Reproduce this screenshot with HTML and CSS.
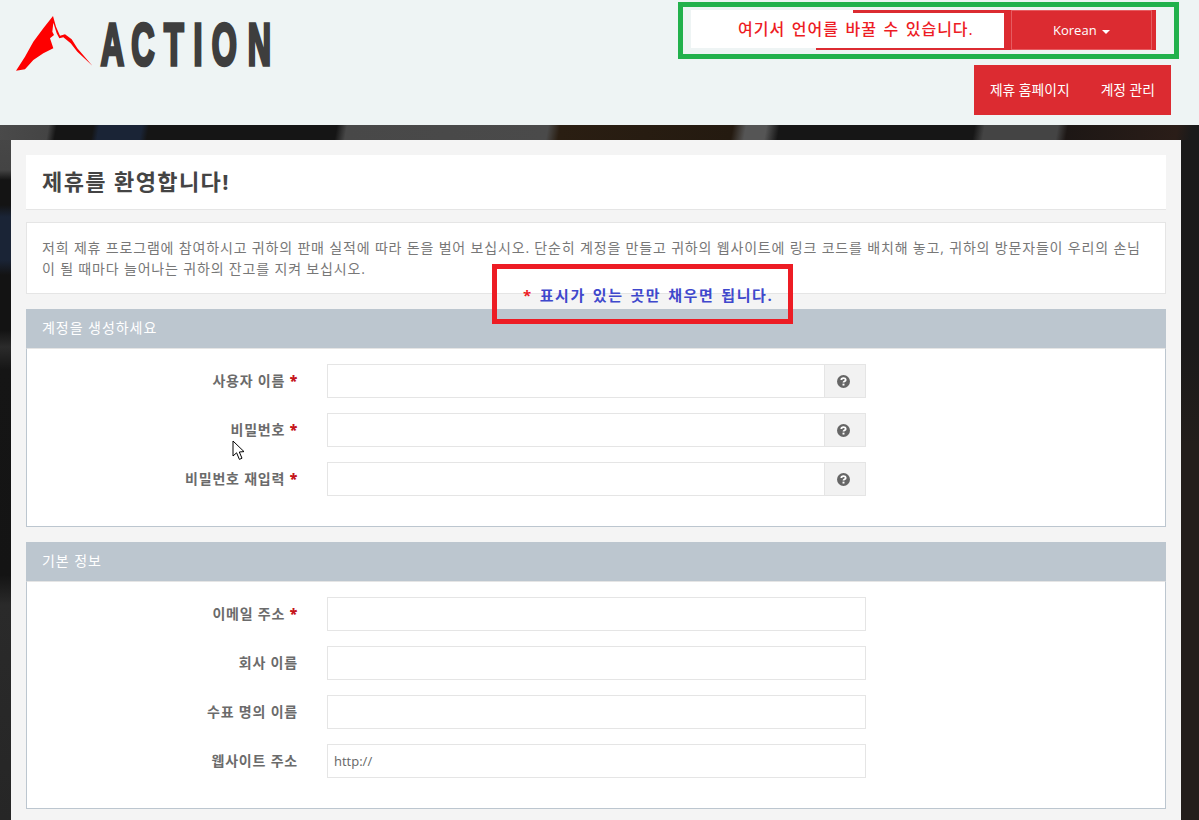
FILE: index.html
```html
<!DOCTYPE html>
<html lang="ko">
<head>
<meta charset="utf-8">
<title>제휴를 환영합니다!</title>
<link rel="stylesheet" href="styles.css">
</head>
<body>
<header class="site-header">
  <svg class="logo" viewBox="0 0 900 375" aria-label="ACTION">
    <path class="logo-mark" d="M159 48 L168 80 L180 107 L195 103 L215 118 L232 145 L277 197 L232 155 L212 130 L190 112 L178 115 L170 100 L160 68 L157 95 L162 105 L150 115 L160 145 L130 160 L100 180 L75 208 L48 212 L75 170 L100 125 L130 85 Z"/>
    <text class="logo-text" transform="scale(.55 1)" x="549 716 895 1055 1155 1352" y="194">ACTION</text>
  </svg>
  <div class="header-right">
    <div class="lang">
      <div class="lang-note">여기서 언어를 바꿀 수 있습니다.</div>
      <button class="lang-btn" type="button">Korean <span class="caret"></span></button>
    </div>
    <nav class="top-nav">
      <a href="#">제휴 홈페이지</a>
      <a href="#">계정 관리</a>
    </nav>
  </div>
</header>

<main class="stage">
  <div class="container">
    <section class="title-box"><h1>제휴를 환영합니다!</h1></section>
    <section class="intro">
      <p>저희 제휴 프로그램에 참여하시고 귀하의 판매 실적에 따라 돈을 벌어 보십시오. 단순히 계정을 만들고 귀하의 웹사이트에 링크 코드를 배치해 놓고, 귀하의 방문자들이 우리의 손님이 될 때마다 늘어나는 귀하의 잔고를 지켜 보십시오.</p>
    </section>

    <section class="panel">
      <h2 class="panel-head">계정을 생성하세요</h2>
      <div class="panel-body">
        <div class="row"><label>사용자 이름 <b>*</b></label>
          <div class="field"><input type="text"><span class="addon"><svg class="help" viewBox="0 0 12 12"><circle cx="6" cy="6" r="6"/><path d="M4 4.6 C4 2.4 8 2.4 8 4.5 C8 5.8 6 5.7 6 7"/><rect x="5.1" y="8" width="1.8" height="1.7"/></svg></span></div></div>
        <div class="row"><label>비밀번호 <b>*</b></label>
          <div class="field"><input type="password"><span class="addon"><svg class="help" viewBox="0 0 12 12"><circle cx="6" cy="6" r="6"/><path d="M4 4.6 C4 2.4 8 2.4 8 4.5 C8 5.8 6 5.7 6 7"/><rect x="5.1" y="8" width="1.8" height="1.7"/></svg></span></div></div>
        <div class="row"><label>비밀번호 재입력 <b>*</b></label>
          <div class="field"><input type="password"><span class="addon"><svg class="help" viewBox="0 0 12 12"><circle cx="6" cy="6" r="6"/><path d="M4 4.6 C4 2.4 8 2.4 8 4.5 C8 5.8 6 5.7 6 7"/><rect x="5.1" y="8" width="1.8" height="1.7"/></svg></span></div></div>
      </div>
    </section>

    <section class="panel">
      <h2 class="panel-head">기본 정보</h2>
      <div class="panel-body">
        <div class="row"><label>이메일 주소 <b>*</b></label><div class="field"><input type="text"></div></div>
        <div class="row"><label>회사 이름</label><div class="field"><input type="text"></div></div>
        <div class="row"><label>수표 명의 이름</label><div class="field"><input type="text"></div></div>
        <div class="row"><label>웹사이트 주소</label><div class="field"><input type="text" value="http://"></div></div>
      </div>
    </section>
  </div>
</main>

<div class="mark-green"></div>
<div class="mark-red"><span><i>*</i> 표시가 있는 곳만 채우면 됩니다.</span></div>
<svg class="cursor" viewBox="0 0 14 22"><path d="M1 1 L1 16 L4.6 12.8 L7.4 19.4 L10 18.2 L7.3 12 L12 11.6 Z"/></svg>
</body>
</html>
```
FILE: styles.css
```css
* { box-sizing: border-box; }
html, body { margin: 0; height: 820px; overflow: hidden; }
body {
  position: relative;
  font-family: "Open Sans", "Noto Sans CJK KR", sans-serif;
  font-size: 13px;
  color: #666;
  background: #161616;
}

/* header */
.site-header {
  height: 125px;
  background: #eef4f4;
  display: flex;
  justify-content: space-between;
}
.logo { width: 300px; height: 125px; flex: none; }
.logo-mark { fill: #fe0000; }
.logo-text {
  font-family: "Liberation Sans", sans-serif;
  font-weight: 700;
  font-size: 176px;
  fill: #3e3e3e;
  stroke: #3e3e3e;
  stroke-width: 11px;
}
.header-right {
  display: flex;
  flex-direction: column;
  align-items: flex-end;
  padding: 10px 28px 0 0;
}
.lang {
  position: relative;
  width: 465px;
  height: 40px;
  margin-right: 15px;
  display: flex;
  background: linear-gradient(#dc2b31, #dc2b31) no-repeat 125px 0 / 340px 40px;
}
.lang-note {
  position: relative;
  width: 313px;
  height: 38px;
  padding-left: 47px;
  background: #fff;
  color: #ed1c24;
  font-size: 16px;
  font-weight: 500;
  line-height: 38px;
  letter-spacing: 1px;
  word-spacing: 1.4px;
  white-space: nowrap;
}
.lang-note::after {
  content: "";
  position: absolute;
  left: 162px;
  right: 0;
  top: 0;
  height: 3px;
  background: #dc2b31;
}
.lang-btn {
  width: 141px;
  height: 40px;
  margin-left: 7px;
  padding: 0;
  border: 1px solid #e65c61;
  background: #dc2b31;
  color: #fff;
  font: inherit;
  font-size: 13px;
}
.caret {
  display: inline-block;
  margin-left: 2px;
  vertical-align: middle;
  border-top: 4px solid #fff;
  border-left: 4px solid transparent;
  border-right: 4px solid transparent;
}
.top-nav {
  display: flex;
  height: 50px;
  margin-top: 15px;
  background: #dc2b31;
}
.top-nav a {
  padding: 0 16px;
  color: #fff;
  font-size: 13.8px;
  line-height: 50px;
  text-decoration: none;
}
.top-nav a + a { padding-left: 15px; }

/* backdrop */
.stage {
  height: 695px;
  padding: 15px 0 0 11px;
  background:
    linear-gradient(100deg, #4a4a4a 0, #444 48px, #151515 56px, #151515 92px, #1a2436 98px, #1a2436 140px, #151515 147px, #151515 332px, #484848 342px, #4a4a4a 540px, #2a1e12 552px, #241a10 722px, #555 735px, #555 755px, #161616 768px, #161616 960px, #444 970px, #444 1042px, #1d1715 1052px, #2a1d18 1160px, #1a1a1a 1175px) no-repeat 0 0 / 100% 15px,
    linear-gradient(180deg, #484848 0, #444 45px, #141414 55px, #141414 80px, #1a2436 92px, #1a2436 135px, #131313 150px, #131313 205px, #2b2b2b 222px, #151515 245px, #141414 450px, #2a2a2a 480px, #262626 695px) no-repeat 0 0 / 11px 100%,
    linear-gradient(180deg, #1a1a1a 0, #1b1a1a 220px, #231e1b 320px, #231e1b 695px) no-repeat 100% 0 / 18px 100%,
    #161616;
}
.container {
  width: 1170px;
  height: 680px;
  padding: 15px;
  background: #f4f4f4;
}

/* welcome */
.title-box {
  height: 55px;
  padding: 0 16px;
  background: #fff;
  border-bottom: 1px solid #e5e5e5;
}
h1 {
  margin: 0;
  color: #444;
  font-size: 22px;
  font-weight: 700;
  line-height: 52px;
  letter-spacing: 1.4px;
}
.intro {
  height: 72px;
  margin-top: 12px;
  padding: 15px 15px 0;
  background: #fff;
  border: 1px solid #e5e5e5;
}
.intro p {
  margin: 0;
  color: #777;
  font-size: 14px;
  line-height: 20.5px;
  letter-spacing: 0.83px;
}

/* panels */
.panel { margin-top: 15px; }
.panel-head {
  height: 39px;
  margin: 0;
  padding: 0 16px;
  background: #bcc6cf;
  color: #fff;
  font-size: 14px;
  font-weight: 400;
  line-height: 38px;
  letter-spacing: 0.95px;
}
.panel-body {
  padding: 15px 0 15px;
  background: #fff;
  border: 1px solid #bcc6cf;
  border-top: 1px solid #e5e5e5;
}
.row {
  display: grid;
  grid-template-columns: 271px 539px;
  column-gap: 29px;
  margin-bottom: 15px;
}
.row label {
  padding-top: 7px;
  color: #6b6b6b;
  font-size: 14px;
  font-weight: 700;
  line-height: 20px;
  letter-spacing: 0.8px;
  text-align: right;
}
.row label b { color: #c5151b; }
.field { display: flex; height: 34px; }
.field input {
  flex: 1;
  min-width: 0;
  height: 34px;
  padding: 0 6px;
  border: 1px solid #e5e5e5;
  background: #fff;
  color: #666;
  font: inherit;
  font-size: 13px;
  outline: none;
}
.addon {
  flex: none;
  width: 41px;
  padding-right: 4px;
  display: flex;
  align-items: center;
  justify-content: center;
  border: 1px solid #e5e5e5;
  border-left: 0;
  background: #f2f2f2;
}
.help { width: 13px; height: 13px; }
.help circle { fill: #666; }
.help path { fill: none; stroke: #fff; stroke-width: 1.7; }
.help rect { fill: #fff; }

/* annotations drawn over the page */
.mark-green {
  position: absolute;
  left: 678px;
  top: 2px;
  width: 501px;
  height: 57px;
  border: 5px solid #22b14c;
}
.mark-red {
  position: absolute;
  left: 492px;
  top: 264px;
  width: 301px;
  height: 60px;
  padding: 15px 0 0 26px;
  border: 5px solid #ed1c24;
}
.mark-red span {
  display: block;
  color: #3f48cc;
  font-size: 15px;
  font-weight: 700;
  line-height: 22px;
  letter-spacing: 1.6px;
  word-spacing: 1.4px;
  white-space: nowrap;
}
.mark-red i { color: #ed1c24; font-style: normal; }
.cursor {
  position: absolute;
  left: 232px;
  top: 440px;
  width: 14px;
  height: 22px;
}
.cursor path { fill: #fff; stroke: #000; stroke-width: 1; }
```
